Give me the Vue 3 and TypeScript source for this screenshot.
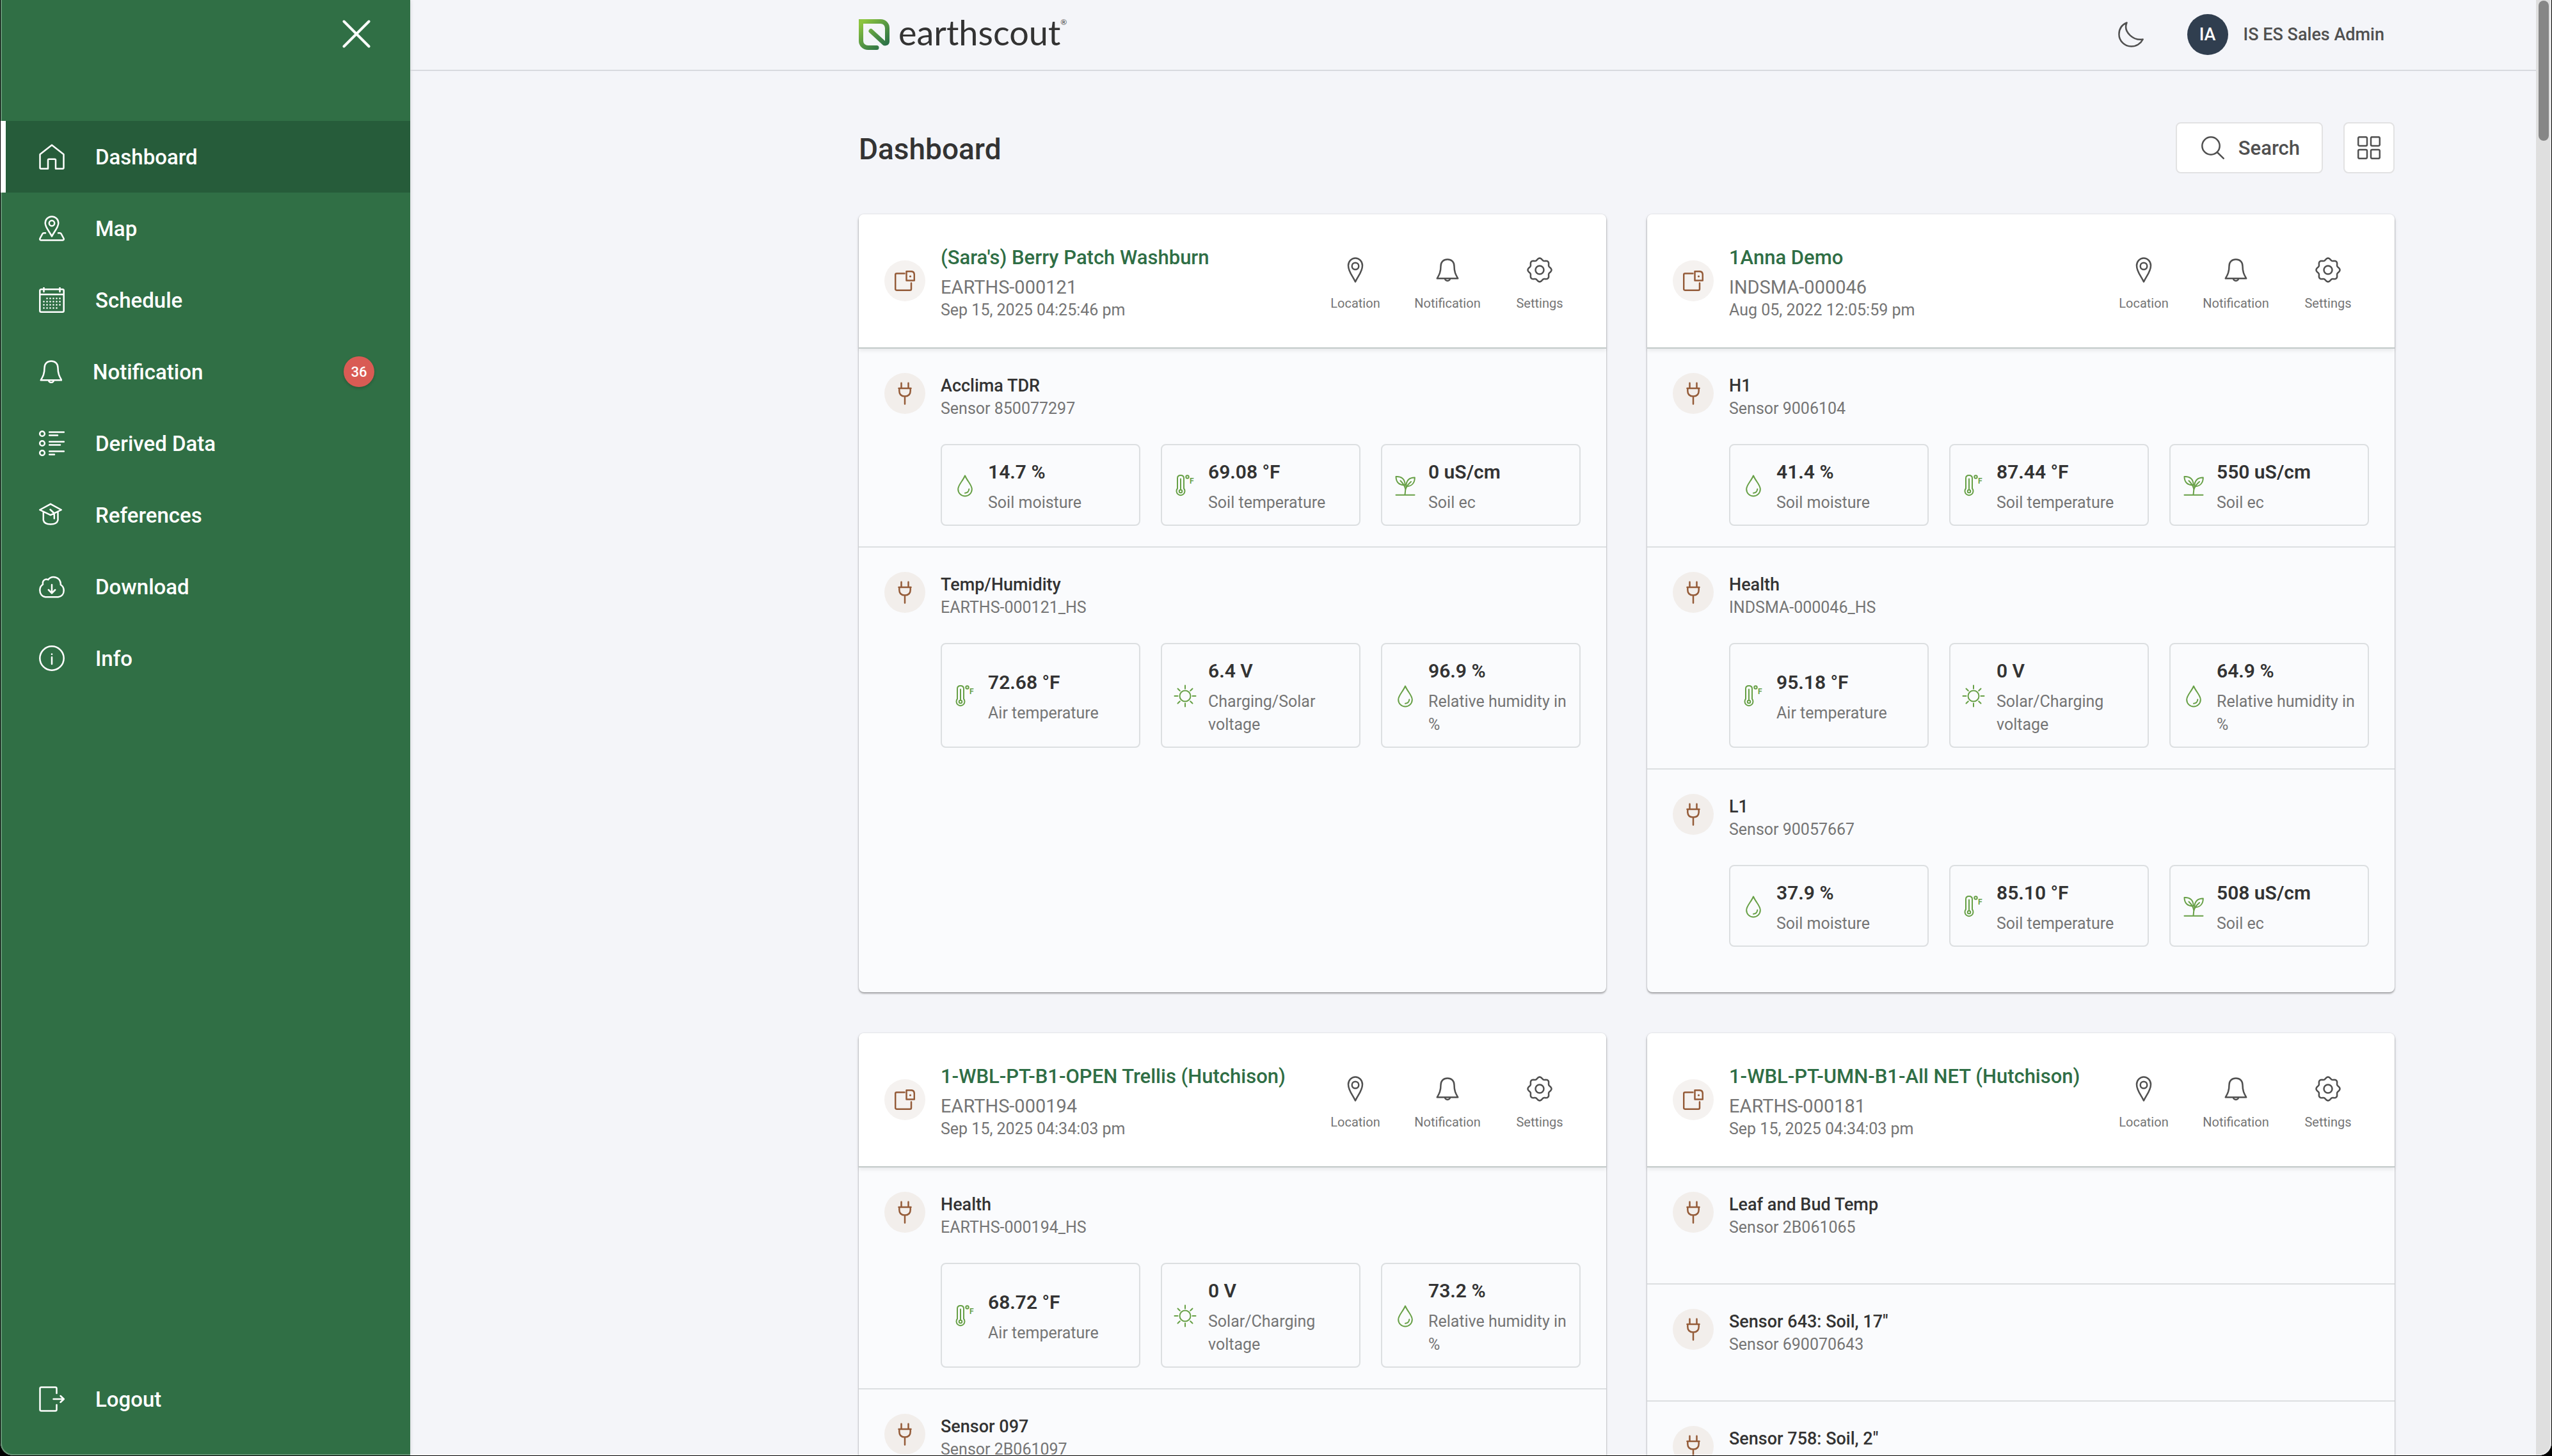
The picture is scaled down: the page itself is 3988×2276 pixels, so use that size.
<script setup lang="ts">
import { ref } from 'vue'

interface Reading {
  icon: 'drop' | 'thermo' | 'sprout' | 'sun'
  value: string
  label: string
}

interface Sensor {
  name: string
  serial?: string
  readings: Reading[]
}

interface Station {
  name: string
  serial: string
  updated: string
  sensors: Sensor[]
}

const navItems = [
  { id: 'home', label: 'Dashboard' },
  { id: 'map', label: 'Map' },
  { id: 'calendar', label: 'Schedule' },
  { id: 'bell', label: 'Notification', badge: 36 },
  { id: 'list', label: 'Derived Data' },
  { id: 'cap', label: 'References' },
  { id: 'cloud', label: 'Download' },
  { id: 'info', label: 'Info' },
]
const active = ref('home')

const soil = (moisture: string, temp: string, ec: string): Reading[] => [
  { icon: 'drop', value: `${moisture} %`, label: 'Soil moisture' },
  { icon: 'thermo', value: `${temp} °F`, label: 'Soil temperature' },
  { icon: 'sprout', value: `${ec} uS/cm`, label: 'Soil ec' },
]

const health = (temp: string, volts: string, voltLabel: string, humidity: string): Reading[] => [
  { icon: 'thermo', value: `${temp} °F`, label: 'Air temperature' },
  { icon: 'sun', value: `${volts} V`, label: voltLabel },
  { icon: 'drop', value: `${humidity} %`, label: 'Relative humidity in %' },
]

const stations: Station[] = [
  {
    name: "(Sara's) Berry Patch Washburn",
    serial: 'EARTHS-000121',
    updated: 'Sep 15, 2025 04:25:46 pm',
    sensors: [
      { name: 'Acclima TDR', serial: 'Sensor 850077297', readings: soil('14.7', '69.08', '0') },
      { name: 'Temp/Humidity', serial: 'EARTHS-000121_HS', readings: health('72.68', '6.4', 'Charging/Solar voltage', '96.9') },
    ],
  },
  {
    name: '1Anna Demo',
    serial: 'INDSMA-000046',
    updated: 'Aug 05, 2022 12:05:59 pm',
    sensors: [
      { name: 'H1', serial: 'Sensor 9006104', readings: soil('41.4', '87.44', '550') },
      { name: 'Health', serial: 'INDSMA-000046_HS', readings: health('95.18', '0', 'Solar/Charging voltage', '64.9') },
      { name: 'L1', serial: 'Sensor 90057667', readings: soil('37.9', '85.10', '508') },
    ],
  },
  {
    name: '1-WBL-PT-B1-OPEN Trellis (Hutchison)',
    serial: 'EARTHS-000194',
    updated: 'Sep 15, 2025 04:34:03 pm',
    sensors: [
      { name: 'Health', serial: 'EARTHS-000194_HS', readings: health('68.72', '0', 'Solar/Charging voltage', '73.2') },
      { name: 'Sensor 097', serial: 'Sensor 2B061097', readings: [] },
    ],
  },
  {
    name: '1-WBL-PT-UMN-B1-All NET (Hutchison)',
    serial: 'EARTHS-000181',
    updated: 'Sep 15, 2025 04:34:03 pm',
    sensors: [
      { name: 'Leaf and Bud Temp', serial: 'Sensor 2B061065', readings: [] },
      { name: 'Sensor 643: Soil, 17"', serial: 'Sensor 690070643', readings: [] },
      { name: 'Sensor 758: Soil, 2"', readings: [] },
    ],
  },
]

// Eight-lobed outline of the settings cog
const cogPath = (() => {
  const points: string[] = []
  for (let i = 0; i < 128; i++) {
    const t = (i / 128) * Math.PI * 2
    const r = 17 + 1.5 * Math.cos(8 * t)
    points.push(`${(20 + r * Math.cos(t)).toFixed(2)} ${(20 + r * Math.sin(t)).toFixed(2)}`)
  }
  return `M${points.join('L')}Z`
})()

const bellPath =
  'M18 1.5C11.5 1.5 7.5 5.8 7.5 12C7.5 21.5 5 25.5 1.8 31.3H34.2C31 25.5 28.5 21.5 28.5 12C28.5 5.8 24.5 1.5 18 1.5ZM14 31.5a4 3.4 0 0 0 8 0'

const calendarDots = [0, 1, 2, 3].flatMap((row) =>
  [0, 1, 2, 3, 4, 5]
    .filter((col) => !(row === 0 && col === 0) && !(row === 3 && col === 5))
    .map((col) => ({ x: 7.5 + col * 5, y: 17.5 + row * 5 })),
)
</script>

<template>
  <div class="window">
    <aside class="sidebar">
      <div class="sidebar-top">
        <button class="close" type="button" aria-label="Close menu">
          <svg width="44" height="44" viewBox="0 0 44 44" fill="none" stroke="currentColor" stroke-width="4" stroke-linecap="round">
            <path d="M2.5 2.5 41.5 41.5M41.5 2.5 2.5 41.5" />
          </svg>
        </button>
      </div>
      <nav class="nav">
        <a
          v-for="item in navItems"
          :key="item.id"
          href="#"
          class="nav-link"
          :class="{ active: item.id === active }"
          @click.prevent="active = item.id"
        >
          <svg v-if="item.id === 'bell'" class="line" width="36" height="36" viewBox="-1 0 36 36"><path :d="bellPath" /></svg>
          <svg v-else class="line" width="40" height="40" viewBox="0 0 40 40">
            <path v-if="item.id === 'home'" d="M20 1.8 1.5 16.3V37.3Q1.5 38.7 3 38.7H14V25.2Q14 23.8 15.5 23.8h9Q26 23.8 26 25.2V38.7H37Q38.5 38.7 38.5 37.3V16.3Z" />
            <template v-else-if="item.id === 'map'">
              <path d="M20 32.5C16.5 25 9.7 18.5 9.7 11.7a10.3 10.3 0 0 1 20.6 0C30.3 18.5 23.5 25 20 32.5Z" />
              <circle cx="20" cy="12" r="4.2" />
              <path d="M10 27.3H7.5Q6 27.3 5.3 28.6L1.6 35.5Q.6 38.5 3 38.5H37Q39.4 38.5 38.4 35.5L34.7 28.6Q34 27.3 32.5 27.3H30" />
            </template>
            <template v-else-if="item.id === 'calendar'">
              <rect x="1.3" y="3.3" width="37.4" height="35.4" rx="2" />
              <path d="M1.3 11.3H38.7M7.5.8V7M32.5.8V7" />
              <circle v-for="(dot, i) in calendarDots" :key="i" class="solid" :cx="dot.x" :cy="dot.y" r="1.3" />
            </template>
            <template v-else-if="item.id === 'list'">
              <circle cx="5" cy="5" r="3.8" />
              <circle cx="5" cy="20" r="3.8" />
              <circle cx="5" cy="35" r="3.8" />
              <path d="M16.2 2.5H39M16.2 7.5H29M16.2 17.5H39M16.2 22.5H33M16.2 32.5H39M16.2 37.5H24" />
            </template>
            <template v-else-if="item.id === 'cap'">
              <path d="M18 2.8 34.8 12 18 20.2 1.2 12ZM6.8 15.5V28Q8 34.5 18 34.5T29.5 28V15.5M17.5 11.5 23.8 17.5V25.5" />
            </template>
            <template v-else-if="item.id === 'cloud'">
              <path d="M10 36.2C4.5 35.5 1.3 31 1.3 25.5C1.3 21.5 3 18.5 6 16.5C4.8 10.5 9.5 7.3 14.2 9.2C16.5 6 19.5 5 22.5 5C29 5 34 9.5 33.8 17C37 19 38.7 22 38.7 26C38.7 31.5 35.5 35.5 30 36.2Z" />
              <path d="M20 17V30M14.8 25 20 30.3 25.2 25" />
            </template>
            <template v-else>
              <circle cx="20" cy="20" r="18.7" />
              <path d="M20 18.2V29M20 13.5V13.8" />
            </template>
          </svg>
          <span class="nav-text">{{ item.label }}</span>
          <span v-if="item.badge" class="badge">{{ item.badge }}</span>
        </a>
      </nav>
      <a href="#" class="nav-link logout">
        <svg class="line" width="40" height="40" viewBox="0 0 40 40">
          <path d="M27.5 11V3.5Q27.5 1.5 25.5 1.5H3.5Q1.5 1.5 1.5 3.5V36.5Q1.5 38.5 3.5 38.5H25.5Q27.5 38.5 27.5 36.5V29M22.5 20H38.5M33.5 15 38.8 20 33.5 25" />
        </svg>
        <span class="nav-text">Logout</span>
      </a>
    </aside>

    <div class="page">
      <header class="topbar">
        <a href="#" class="brand">
          <svg width="48" height="48" viewBox="0 0 48 48" fill="none">
            <defs>
              <linearGradient id="brand-fill" x1="6" y1="4" x2="42" y2="46" gradientUnits="userSpaceOnUse">
                <stop offset="0" stop-color="#8cc43f" />
                <stop offset=".45" stop-color="#5a9a43" />
                <stop offset="1" stop-color="#256b48" />
              </linearGradient>
            </defs>
            <path
              d="M28 44.5H14.5C8.5 44.5 3.5 40 3.5 34V3.5H34C40 3.5 44.5 8 44.5 14V34.5C44.5 38 40.5 39 38.5 36.5L19 18.5"
              stroke="url(#brand-fill)"
              stroke-width="7"
              stroke-linecap="round"
            />
          </svg>
          <span class="brand-name">earthscout</span><span class="brand-mark">®</span>
        </a>
        <div class="account">
          <button class="plain" type="button" aria-label="Dark mode">
            <svg class="line" width="40" height="40" viewBox="0 0 40 40">
              <path d="M13.5 1.5C5.5 5 1.4 12 1.4 19.5C1.4 30 10 38.6 20.5 38.6C28.5 38.6 35.5 34 38.6 27.5C32 28.5 25 27 18.8 21.3C12.5 15.5 10.5 8.5 13.5 1.5Z" />
            </svg>
          </button>
          <a href="#" class="user"><span class="avatar">IA</span>IS ES Sales Admin</a>
        </div>
      </header>

      <main class="content">
        <div class="title-row">
          <h1>Dashboard</h1>
          <div class="tools">
            <button class="tool search" type="button">
              <svg class="line" width="36" height="36" viewBox="0 0 36 36">
                <circle cx="15" cy="15" r="13.7" />
                <path d="M24.8 25 34.7 34.7" />
              </svg>
              Search
            </button>
            <button class="tool layout" type="button" aria-label="Grid view">
              <svg class="line" width="36" height="36" viewBox="0 0 36 36">
                <rect x="1.2" y="1.2" width="13.8" height="13.8" rx="2" />
                <rect x="21" y="1.2" width="13.8" height="13.8" rx="2" />
                <rect x="1.2" y="21" width="13.8" height="13.8" rx="2" />
                <rect x="21" y="21" width="13.8" height="13.8" rx="2" />
              </svg>
            </button>
          </div>
        </div>

        <div class="cards">
          <article v-for="station in stations" :key="station.serial" class="card">
            <div class="card-head">
              <span class="disc">
                <svg class="line" width="32" height="32" viewBox="0 0 32 32">
                  <path d="M15.5 4.5H3.2Q1.2 4.5 1.2 6.5V28.7Q1.2 30.7 3.2 30.7H24Q26 30.7 26 28.7V19.5" />
                  <path d="M18.5 1.2H25.5Q30.8 1.2 30.8 6.5V15.5H18.5Z" />
                  <circle class="solid" cx="24.5" cy="9" r="1.6" />
                </svg>
              </span>
              <div class="station">
                <h2><a href="#">{{ station.name }}</a></h2>
                <p class="serial">{{ station.serial }}</p>
                <p class="small">{{ station.updated }}</p>
              </div>
              <div class="actions">
                <button class="action" type="button">
                  <svg class="line" width="40" height="40" viewBox="0 0 40 40">
                    <path d="M20 38.5C15.5 29 9 22.5 9 13.2A11 11.7 0 0 1 31 13.2C31 22.5 24.5 29 20 38.5Z" />
                    <circle cx="20" cy="14" r="5.3" />
                  </svg>
                  Location
                </button>
                <button class="action" type="button">
                  <svg class="line" width="40" height="40" viewBox="-2 -2 40 40"><path :d="bellPath" /></svg>
                  Notification
                </button>
                <button class="action" type="button">
                  <svg class="line" width="40" height="40" viewBox="0 0 40 40">
                    <path :d="cogPath" />
                    <circle cx="20" cy="20" r="6.5" />
                  </svg>
                  Settings
                </button>
              </div>
            </div>

            <div class="card-body">
              <section v-for="sensor in station.sensors" :key="sensor.name" class="sensor">
                <div class="sensor-head">
                  <span class="disc warm">
                    <svg class="line" width="32" height="36" viewBox="0 0 32 36">
                      <path d="M10.5 1.8V10M21.5 1.8V10M6.5 10H25.5M7.3 10V14Q7.3 22.5 16 22.5T24.7 14V10M16 22.5V34.5" />
                    </svg>
                  </span>
                  <div class="sensor-name">
                    <h3>{{ sensor.name }}</h3>
                    <p v-if="sensor.serial" class="small">{{ sensor.serial }}</p>
                  </div>
                </div>
                <div class="readings">
                  <div v-for="reading in sensor.readings" :key="reading.label" class="reading">
                    <svg class="line green" width="36" height="36" viewBox="0 0 36 36">
                      <template v-if="reading.icon === 'drop'">
                        <path d="M18 2.5C14.5 11 7.2 17 7.2 23.7a10.8 10.8 0 0 0 21.6 0C28.8 17 21.5 11 18 2.5Z" />
                        <path d="M24.3 23.5Q23.8 29.3 18 29.7" />
                      </template>
                      <template v-else-if="reading.icon === 'thermo'">
                        <path d="M6 22.5V6.500Q6 2 11 2T16 6.500V22.500A6.500 6.500 0 1 1 6 22.500Z" />
                        <path d="M11 7.500V24" />
                        <circle cx="11" cy="27" r="2.300" />
                        <circle cx="21.500" cy="4.500" r="2.200" />
                        <text x="25" y="15">F</text>
                      </template>
                      <template v-else-if="reading.icon === 'sprout'">
                        <path d="M3.500 4C11 3.500 17.500 7 17.700 17C9 18 3.500 13 3.500 4ZM32.800 5.500C25 5.500 19.500 9 19.200 19.500C28 19.500 32.800 14 32.800 5.500Z" />
                        <path d="M10.500 10.500C14.500 14.500 18 19 18.300 24.500L17.500 32.500M27 12C23 15.500 19.500 19.500 18.400 24.500M3.500 32.700H32.500" />
                      </template>
                      <template v-else>
                        <circle cx="18" cy="18" r="8.500" />
                        <path d="M18 1.500V6.500M18 29.500V34.500M1.500 18H6.500M29.500 18H34.500M6.500 6.500 9.800 9.800M26.200 26.200 29.500 29.500M29.500 6.500 26.200 9.800M9.800 26.200 6.500 29.500" />
                      </template>
                    </svg>
                    <div>
                      <p class="value">{{ reading.value }}</p>
                      <p class="label">{{ reading.label }}</p>
                    </div>
                  </div>
                </div>
              </section>
            </div>
          </article>
        </div>
      </main>
    </div>

    <div class="scroll-track" aria-hidden="true"><div class="scroll-thumb"></div></div>
  </div>
</template>

<style>
html,
body {
  margin: 0;
  background: #000;
}
</style>

<style scoped>
.window {
  position: relative;
  display: flex;
  box-sizing: border-box;
  height: 100vh;
  overflow: hidden;
  border: solid #000;
  border-width: 0 1px 1px;
  border-radius: 0 0 20px 20px;
  background: #f4f5f9;
  color: #757575;
  font-family: Roboto, 'Noto Sans', sans-serif;
}

/* translucent rim drawn over the window's edge */
.window::after {
  content: '';
  position: absolute;
  inset: -2px 0 0;
  border: 2px solid rgba(255, 255, 255, 0.25);
  border-radius: 0 0 19px 19px;
  pointer-events: none;
}

h1,
h2,
h3,
p {
  margin: 0;
}

a {
  color: inherit;
  text-decoration: none;
}

button {
  padding: 0;
  border: 0;
  background: none;
  color: inherit;
  font: inherit;
  cursor: pointer;
}

svg {
  display: block;
  flex: none;
}

.line {
  fill: none;
  stroke: currentColor;
  stroke-width: 2.5;
  stroke-linecap: round;
  stroke-linejoin: round;
}

.solid {
  fill: currentColor;
  stroke: none;
}

.sidebar {
  display: flex;
  flex: none;
  flex-direction: column;
  width: 640px;
  background: #306f45;
  box-shadow: 0 0 6px rgba(0, 0, 0, 0.15);
  color: #fff;
}

.sidebar-top {
  display: flex;
  align-items: flex-start;
  justify-content: flex-end;
  box-sizing: border-box;
  height: 189px;
  padding: 31px 62px 0;
}

.nav {
  flex: 1;
}

.nav-link {
  display: flex;
  align-items: center;
  box-sizing: border-box;
  height: 112px;
  padding: 0 56px 0 60px;
  gap: 48px;
  font-size: 33px;
  font-weight: 500;
}

.nav-link.active {
  padding-left: 52px;
  border-left: 8px solid #fff;
  background: #265c3a;
}

.nav-text {
  flex: 1;
}

.logout {
  margin-bottom: 32px;
}

.badge {
  display: flex;
  align-items: center;
  justify-content: center;
  width: 48px;
  height: 48px;
  border-radius: 50%;
  background: #d95b54;
  box-shadow: 0 2px 4px rgba(0, 0, 0, 0.2);
  font-size: 22px;
}

.page {
  flex: 1;
  min-width: 0;
}

.topbar {
  display: flex;
  align-items: center;
  justify-content: space-between;
  height: 107px;
  padding: 0 221px 2px 701px;
  border-bottom: 2px solid #d8dadf;
}

.brand {
  display: flex;
  align-items: center;
  color: #333;
  font-family: Lato, 'Open Sans', sans-serif;
}

.brand-name {
  padding: 0 0 6px 14px;
  font-size: 54px;
  line-height: 64px;
}

.brand-mark {
  align-self: flex-start;
  padding-top: 8px;
  font-size: 12px;
  line-height: 16px;
}

.account {
  display: flex;
  align-items: center;
  padding-right: 16px;
  gap: 68px;
  color: #505050;
}

.user {
  display: flex;
  align-items: center;
  gap: 24px;
  font-size: 27px;
  font-weight: 500;
}

.avatar {
  display: flex;
  align-items: center;
  justify-content: center;
  width: 64px;
  height: 64px;
  border-radius: 50%;
  background: #303e4f;
  color: #fff;
}

.content {
  padding: 80px 221px 64px 701px;
}

.title-row {
  display: flex;
  align-items: center;
  justify-content: space-between;
  margin-bottom: 64px;
}

h1 {
  padding-top: 4px;
  color: #333;
  font-size: 46px;
  font-weight: 500;
  line-height: 56px;
}

.tools {
  display: flex;
  gap: 32px;
}

.tool {
  display: flex;
  align-items: center;
  justify-content: center;
  box-sizing: border-box;
  height: 80px;
  border: 2px solid #e2e2e3;
  border-radius: 8px;
  background: #fff;
  color: #505050;
  font-size: 31px;
  font-weight: 500;
}

.search {
  padding: 0 34px 0 38px;
  gap: 22px;
}

.layout {
  width: 80px;
}

.cards {
  display: grid;
  grid-template-columns: 1fr 1fr;
  gap: 64px;
}

.card {
  border-radius: 8px;
  background: #fafbfd;
  box-shadow: 0 2px 3px rgba(0, 0, 0, 0.35), 0 0 2px rgba(0, 0, 0, 0.15);
}

.card-head {
  display: flex;
  align-items: center;
  height: 208px;
  padding: 0 32px 0 40px;
  gap: 24px;
  border-bottom: 2px solid #c2c9c8;
  border-radius: 8px 8px 0 0;
  background: #fff;
  box-shadow: 0 3px 6px rgba(0, 0, 0, 0.08);
}

.disc {
  display: flex;
  flex: none;
  align-items: center;
  justify-content: center;
  width: 64px;
  height: 64px;
  border-radius: 50%;
  background: #f5f2f0;
  color: #945b38;
}

.disc.warm {
  background: #f2eeeb;
}

.station {
  flex: 1;
  padding-top: 4px;
}

h2 {
  margin-bottom: 4px;
  color: #2f6e45;
  font-size: 31px;
  font-weight: 500;
  line-height: 48px;
}

.serial {
  font-size: 29px;
  line-height: 36px;
}

.small,
.label {
  font-size: 25px;
  line-height: 36px;
}

.actions {
  display: flex;
}

.action {
  display: flex;
  flex-direction: column;
  align-items: center;
  width: 144px;
  padding-top: 12px;
  gap: 18px;
  font-size: 20px;
  line-height: 28px;
}

.action svg {
  color: #505050;
}

.card-body {
  padding-bottom: 39px;
}

.sensor {
  padding: 38px 40px 32px;
  border-bottom: 2px solid #dcdfe1;
}

.sensor:last-child {
  border-bottom: 0;
}

.sensor-head {
  display: flex;
  align-items: flex-start;
  height: 72px;
  margin-bottom: 39px;
  gap: 24px;
}

.sensor-name {
  padding-top: 2px;
}

h3 {
  color: #333;
  font-size: 27px;
  font-weight: 500;
  line-height: 36px;
}

.readings {
  display: grid;
  grid-template-columns: repeat(3, 1fr);
  margin-left: 88px;
  gap: 32px;
}

.reading {
  display: flex;
  align-items: center;
  padding: 18px 10px 16px 18px;
  gap: 18px;
  border: 2px solid #dcdfe1;
  border-radius: 8px;
}

.green {
  color: #67a046;
  stroke-width: 2;
}

.green text {
  fill: currentColor;
  stroke: none;
  font-size: 12px;
  font-weight: 700;
}

.value {
  margin-bottom: 6px;
  color: #333;
  font-size: 30px;
  font-weight: 600;
  line-height: 48px;
}

.scroll-track {
  display: flex;
  flex: none;
  justify-content: center;
  width: 24px;
  background: #dfdfdf;
}

.scroll-thumb {
  width: 16px;
  height: 219px;
  margin-top: 1px;
  border-radius: 8px;
  background: #868686;
}
</style>
